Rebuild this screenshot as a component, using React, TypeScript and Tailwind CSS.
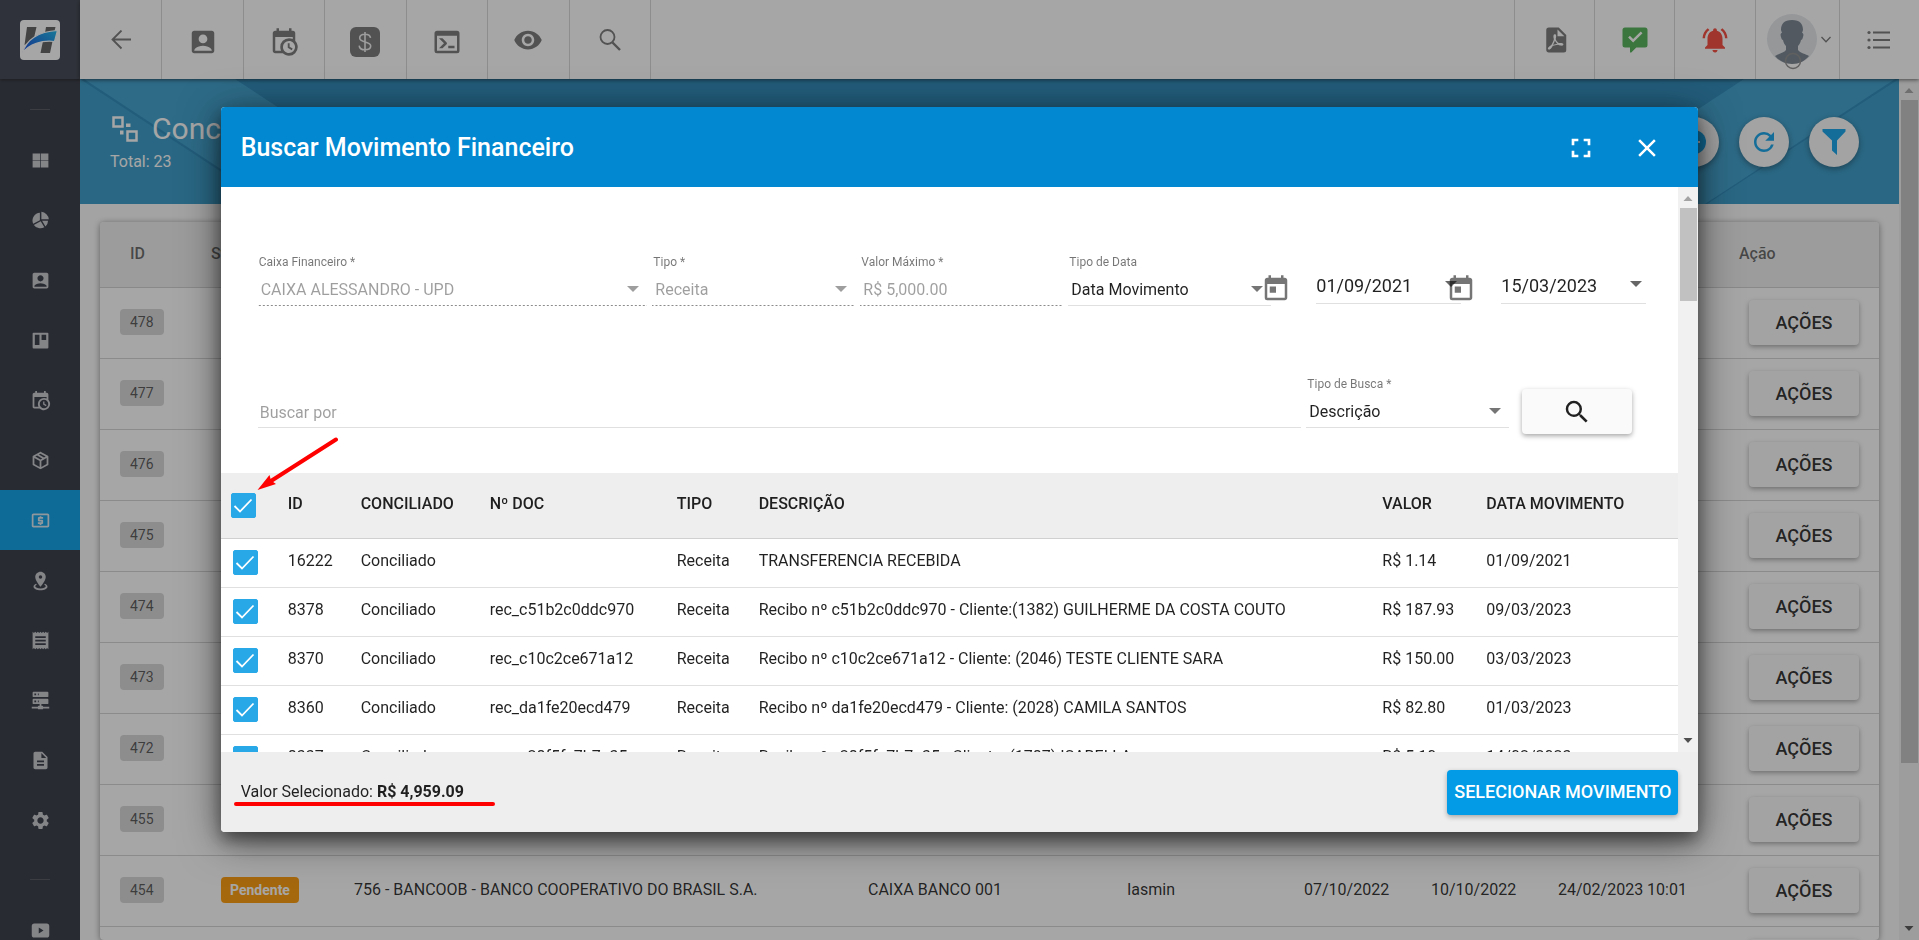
import { useState } from 'react'
import type { ReactNode } from 'react'
import {
  MdAccountBox,
  MdClose,
  MdDescription,
  MdFullscreen,
  MdLocalAtm,
  MdNotificationsActive,
  MdReceipt,
  MdRefresh,
  MdRemoveRedEye,
  MdSearch,
  MdSettings,
  MdToday,
} from 'react-icons/md'

type Movimento = {
  id: string
  doc: string
  descricao: string
  valor: string
  data: string
}

type Conciliacao = {
  id: string
  status?: string
  banco?: string
  caixa?: string
  usuario?: string
  inicio?: string
  fim?: string
  cadastro?: string
}

const MOVIMENTOS: Movimento[] = [
  { id: '16222', doc: '', descricao: 'TRANSFERENCIA RECEBIDA', valor: 'R$ 1.14', data: '01/09/2021' },
  { id: '8378', doc: 'rec_c51b2c0ddc970', descricao: 'Recibo nº c51b2c0ddc970 - Cliente:(1382) GUILHERME DA COSTA COUTO', valor: 'R$ 187.93', data: '09/03/2023' },
  { id: '8370', doc: 'rec_c10c2ce671a12', descricao: 'Recibo nº c10c2ce671a12 - Cliente: (2046) TESTE CLIENTE SARA', valor: 'R$ 150.00', data: '03/03/2023' },
  { id: '8360', doc: 'rec_da1fe20ecd479', descricao: 'Recibo nº da1fe20ecd479 - Cliente: (2028) CAMILA SANTOS', valor: 'R$ 82.80', data: '01/03/2023' },
  { id: '8337', doc: 'rec_c28f5fe7b7a35', descricao: 'Recibo nº c28f5fe7b7a35 - Cliente: (1787) ISABELLA', valor: 'R$ 5.10', data: '14/02/2023' },
]

const CONCILIACOES: Conciliacao[] = [
  { id: '478' },
  { id: '477' },
  { id: '476' },
  { id: '475' },
  { id: '474' },
  { id: '473' },
  { id: '472' },
  { id: '455' },
  {
    id: '454',
    status: 'Pendente',
    banco: '756 - BANCOOB - BANCO COOPERATIVO DO BRASIL S.A.',
    caixa: 'CAIXA BANCO 001',
    usuario: 'Iasmin',
    inicio: '07/10/2022',
    fim: '10/10/2022',
    cadastro: '24/02/2023 10:01',
  },
  { id: '453' },
]

function Glyph({ d, className }: { d: string; className: string }) {
  return (
    <svg viewBox="0 0 24 24" className={className} fill="currentColor" fillRule="evenodd" aria-hidden="true">
      <path d={d} />
    </svg>
  )
}

const CALENDAR_CLOCK =
  'M15,13H16.5V15.82L18.94,17.23L18.19,18.53L15,16.69V13M19,8H5V19H9.67C9.24,18.09 9,17.07 9,16A7,7 0 0,1 16,9C17.07,9 18.09,9.24 19,9.67V8M5,21C3.89,21 3,20.1 3,19V5C3,3.89 3.89,3 5,3H6V1H8V3H16V1H18V3H19A2,2 0 0,1 21,5V11.1C22.24,12.36 23,14.09 23,16A7,7 0 0,1 16,23C14.09,23 12.36,22.24 11.1,21H5M16,11.15A4.85,4.85 0 0,0 11.15,16C11.15,18.68 13.32,20.85 16,20.85A4.85,4.85 0 0,0 20.85,16C20.85,13.32 18.68,11.15 16,11.15Z'
const FILE_PDF =
  'M14,9H19.5L14,3.5V9M7,2H15L21,8V20A2,2 0 0,1 19,22H7C5.89,22 5,21.1 5,20V4A2,2 0 0,1 7,2M11.93,12.44C12.34,13.34 12.86,14.08 13.46,14.59L13.87,14.91C13,15.07 11.8,15.35 10.53,15.84L10.42,15.88L10.92,14.84C11.37,13.97 11.7,13.18 11.93,12.44M18.41,16.25C18.59,16.07 18.68,15.84 18.69,15.59C18.72,15.39 18.67,15.2 18.57,15.04C18.28,14.57 17.53,14.35 16.29,14.35L15,14.42L14.13,13.84C13.5,13.32 12.93,12.41 12.53,11.28L12.57,11.14C12.9,9.81 13.21,8.2 12.55,7.54C12.39,7.38 12.17,7.3 11.94,7.3H11.7C11.33,7.3 11,7.69 10.91,8.07C10.54,9.4 10.76,10.13 11.13,11.34C10.88,12.23 10.56,13.25 10.05,14.28L9.09,16.08L8.2,16.57C7,17.32 6.43,18.16 6.32,18.69C6.28,18.88 6.3,19.05 6.37,19.23L6.4,19.28L6.88,19.59L7.32,19.7C8.13,19.7 9.05,18.75 10.29,16.63L10.47,16.56C11.5,16.23 12.78,16 14.5,15.81C15.53,16.32 16.74,16.55 17.5,16.55C17.94,16.55 18.24,16.44 18.41,16.25Z'
const COMMENT_CHECK = 'M4,2H20A2,2 0 0,1 22,4V16A2,2 0 0,1 20,18H13L9,22H8V18H4A2,2 0 0,1 2,16V4A2,2 0 0,1 4,2M10.5,14L18,6.5L16.6,5.1L10.5,11.2L7.9,8.6L6.5,10Z'
const TERMINAL = 'M20,19V7H4V19H20M20,3A2,2 0 0,1 22,5V19A2,2 0 0,1 20,21H4A2,2 0 0,1 2,19V5C2,3.89 2.9,3 4,3H20M13,17V15H18V17H13M9.58,13L5.57,9H8.4L11.7,12.3C12.09,12.69 12.09,13.33 11.7,13.72L8.42,17H5.59L9.58,13Z'
const WINDOWS = 'M3,4H11.6V11.6H3ZM12.4,4H21V11.6H12.4ZM3,12.4H11.6V20H3ZM12.4,12.4H21V20H12.4Z'
const PIE = 'M13,2A9.5,9.5 0 0,1 21.5,10.5H13ZM11.3,3V11.6L3.6,15.6A9,9 0 0,1 11.3,3M12.2,12.8L16.4,19.6A9,9 0 0,1 4.4,17ZM13.8,12.2H20.6A9,9 0 0,1 17.7,18.8Z'
const TRELLO = 'M4,3H20A1,1 0 0,1 21,4V20A1,1 0 0,1 20,21H4A1,1 0 0,1 3,20V4A1,1 0 0,1 4,3M5.5,5.5V17H10.8V5.5ZM13.2,5.5V11.5H18.5V5.5Z'
const PACKAGE =
  'M21,16.5C21,16.88 20.79,17.21 20.47,17.38L12.57,21.82C12.41,21.94 12.21,22 12,22C11.79,22 11.59,21.94 11.43,21.82L3.53,17.38C3.21,17.21 3,16.88 3,16.5V7.5C3,7.12 3.21,6.79 3.53,6.62L11.43,2.18C11.59,2.06 11.79,2 12,2C12.21,2 12.41,2.06 12.57,2.18L20.47,6.62C20.79,6.79 21,7.12 21,7.5V16.5M12,4.15L10.11,5.22L16,8.61L17.96,7.5L12,4.15M6.04,7.5L12,10.85L13.96,9.75L8.08,6.35L6.04,7.5M5,15.91L11,19.29V12.58L5,9.21V15.91M19,15.91V9.21L13,12.58V19.29L19,15.91Z'
const MARKER =
  'M12,2C15.31,2 18,4.66 18,7.95C18,12.41 12,19 12,19S6,12.41 6,7.95C6,4.66 8.69,2 12,2M12,6A2,2 0 0,0 10,8A2,2 0 0,0 12,10A2,2 0 0,0 14,8A2,2 0 0,0 12,6M20,19C20,21.21 16.42,23 12,23C7.58,23 4,21.21 4,19C4,17.71 5.22,16.56 7.11,15.83L7.75,16.74C6.67,17.19 6,17.81 6,18.5C6,19.88 8.69,21 12,21C15.31,21 18,19.88 18,18.5C18,17.81 17.33,17.19 16.25,16.74L16.89,15.83C18.78,16.56 20,17.71 20,19Z'
const SERVER =
  'M13,18H14A1,1 0 0,1 15,19H22V21H15A1,1 0 0,1 14,22H10A1,1 0 0,1 9,21H2V19H9A1,1 0 0,1 10,18H11V16H4A1,1 0 0,1 3,15V11A1,1 0 0,1 4,10H20A1,1 0 0,1 21,11V15A1,1 0 0,1 20,16H13V18M4,2H20A1,1 0 0,1 21,3V7A1,1 0 0,1 20,8H4A1,1 0 0,1 3,7V3A1,1 0 0,1 4,2M9,6H10V4H9V6M9,14H10V12H9V14M5,4V6H7V4H5M5,12V14H7V12H5Z'
const YOUTUBE = 'M5,4H19A3,3 0 0,1 22,7V17A3,3 0 0,1 19,20H5A3,3 0 0,1 2,17V7A3,3 0 0,1 5,4M10,8.5V15.5L15.5,12Z'

const MENU: { label: string; icon: ReactNode; active?: boolean }[] = [
  { label: 'Dashboard', icon: <Glyph d={WINDOWS} className="size-[21px]" /> },
  { label: 'Relatórios', icon: <Glyph d={PIE} className="size-[21px]" /> },
  { label: 'Clientes', icon: <MdAccountBox className="size-[21px]" /> },
  { label: 'Quadros', icon: <Glyph d={TRELLO} className="size-[21px]" /> },
  { label: 'Agenda', icon: <Glyph d={CALENDAR_CLOCK} className="size-[21px]" /> },
  { label: 'Produtos', icon: <Glyph d={PACKAGE} className="size-[21px]" /> },
  { label: 'Financeiro', icon: <MdLocalAtm className="size-[21px]" />, active: true },
  { label: 'Mapa', icon: <Glyph d={MARKER} className="size-[21px]" /> },
  { label: 'Notas', icon: <MdReceipt className="size-[21px]" /> },
  { label: 'Rede', icon: <Glyph d={SERVER} className="size-[21px]" /> },
  { label: 'Documentos', icon: <MdDescription className="size-[21px]" /> },
  { label: 'Configurações', icon: <MdSettings className="size-[21px]" /> },
]

function Logo() {
  return (
    <svg viewBox="0 0 40 40" className="size-10" aria-hidden="true">
      <defs>
        <linearGradient id="swoosh" x1="0" y1="1" x2="1" y2="0">
          <stop offset="0" stopColor="#0a3fd8" />
          <stop offset="1" stopColor="#16b4e8" />
        </linearGradient>
      </defs>
      <rect width="40" height="40" rx="4" fill="#fff" />
      <path d="M7 7h9.500l-3 13L4.500 25z M26 7h9.500l-1 4-9.500 2z M23 21l10-2-3 14h-9.500z" fill="#5a5a5a" />
      <path d="M2.500 33C6 20 18 11.500 37.500 10.500l-3 11C22 20 9 24 2.500 33z" fill="url(#swoosh)" stroke="#fff" strokeWidth="1.2" />
    </svg>
  )
}

function Sidebar() {
  return (
    <aside className="flex w-20 shrink-0 flex-col overflow-hidden bg-[#303340] text-[#c6c8cc]">
      <a href="#" aria-label="Início" className="flex h-[79px] shrink-0 items-center justify-center bg-[#3a3f4c] shadow-[0_1px_3px_rgba(0,0,0,0.5)]">
        <Logo />
      </a>
      <div className="flex h-[51px] shrink-0 justify-center pt-[30px]">
        <span className="h-px w-5 bg-[#4d505a]" />
      </div>
      {MENU.map((m) => (
        <a
          key={m.label}
          href="#"
          aria-label={m.label}
          className={`flex h-[60px] shrink-0 items-center justify-center ${m.active ? 'bg-[#039be5] text-[#d8e8f0]' : ''}`}
        >
          {m.icon}
        </a>
      ))}
      <div className="flex h-[50px] shrink-0 justify-center pt-[29px]">
        <span className="h-px w-5 bg-[#4d505a]" />
      </div>
      <a href="#" aria-label="Vídeos" className="flex h-[60px] shrink-0 items-center justify-center">
        <Glyph d={YOUTUBE} className="size-[21px]" />
      </a>
    </aside>
  )
}

function TopBar() {
  const left: { label: string; icon: ReactNode }[] = [
    {
      label: 'Voltar',
      icon: (
        <svg viewBox="0 0 20 20" className="size-5" fill="none" stroke="currentColor" strokeWidth="1.8">
          <path d="M20 9.5H1M10.500 0.500L1.500 9.500l9 9" />
        </svg>
      ),
    },
    { label: 'Clientes', icon: <MdAccountBox className="mt-1 size-[30px]" /> },
    { label: 'Agenda', icon: <Glyph d={CALENDAR_CLOCK} className="mt-1 size-[30px]" /> },
    {
      label: 'Financeiro',
      icon: (
        <svg viewBox="0 0 30 30" className="mt-1 size-[30px]">
          <rect width="30" height="30" rx="6" fill="currentColor" />
          <path
            d="M15 5v20M20.500 10.800C20.200 8.500 18 7.200 15 7.200S9.700 8.700 9.700 11c0 5.200 11 2.700 11 8 0 2.300-2.400 3.800-5.700 3.800s-5.600-1.600-5.800-4.200"
            fill="none"
            stroke="#f0f0f0"
            strokeWidth="1.6"
          />
        </svg>
      ),
    },
    { label: 'Terminal', icon: <Glyph d={TERMINAL} className="mt-1 size-[30px]" /> },
    { label: 'Visualizar', icon: <MdRemoveRedEye className="size-[30px]" /> },
    {
      label: 'Pesquisar',
      icon: (
        <svg viewBox="0 0 22 22" className="size-[22px]" fill="none" stroke="currentColor" strokeWidth="1.800">
          <circle cx="8.500" cy="8" r="7" />
          <path d="M13.500 13.500l7.500 7.500" strokeWidth="2.400" />
        </svg>
      ),
    },
  ]
  return (
    <header className="z-10 flex h-[79px] shrink-0 justify-between bg-white text-[#737373] shadow-[0_1px_4px_rgba(0,0,0,0.6)]">
      <nav className="flex w-[571px] pl-px">
        {left.map((b) => (
          <button key={b.label} aria-label={b.label} className="flex flex-1 items-center justify-center border-r border-[#d6d6d6]">
            {b.icon}
          </button>
        ))}
      </nav>
      <nav className="flex w-[405px]">
        <button aria-label="PDF" className="flex flex-1 items-center justify-center border-l border-[#d6d6d6]">
          <Glyph d={FILE_PDF} className="size-[30px]" />
        </button>
        <button aria-label="Mensagens" className="flex flex-1 items-center justify-center border-l border-[#d6d6d6] text-[#4caf50]">
          <Glyph d={COMMENT_CHECK} className="size-[30px]" />
        </button>
        <button aria-label="Notificações" className="flex flex-1 items-center justify-center border-l border-[#d6d6d6] text-[#f44336]">
          <MdNotificationsActive className="size-[30px]" />
        </button>
        <button aria-label="Perfil" className="flex flex-1 items-center justify-center gap-1 border-l border-[#d6d6d6] pl-1">
          <svg viewBox="0 0 50 60" className="h-[60px] w-[50px]">
            <circle cx="25" cy="29" r="25" fill="#e3e6ea" />
            <path
              d="M25 10c8 0 11 4 11 10l-1 3c1 0 2 1 1 4-.5 2-1 3-2 3-.5 3-2 5-3 6v4c2 3 8 4 11 6-4 5-10 8-17 8s-13-3-17-8c3-2 9-3 11-6v-4c-1-1-2.500-3-3-6-1 0-1.500-1-2-3-1-3 0-4 1-4l-1-3c0-6 3-10 11-10z"
              fill="#737f8b"
            />
            <circle cx="26" cy="51" r="7.500" fill="none" stroke="#8a8a8a" strokeWidth="1.500" />
          </svg>
          <svg viewBox="0 0 10 7" className="h-[7px] w-2.5" fill="none" stroke="currentColor" strokeWidth="1.300">
            <path d="M.5 1L5 5.800 9.500 1" />
          </svg>
        </button>
        <button aria-label="Menu" className="flex flex-1 items-center justify-center border-l border-[#d6d6d6]">
          <svg viewBox="0 0 24 20" className="h-5 w-6" fill="currentColor">
            <circle cx="2" cy="2.500" r="1.600" />
            <circle cx="2" cy="10" r="1.600" />
            <circle cx="2" cy="17.500" r="1.600" />
            <path d="M6 1.500h17v2H6zM6 9h17v2H6zM6 16.500h17v2H6z" />
          </svg>
        </button>
      </nav>
    </header>
  )
}

function Scrollbar({ thumb }: { thumb: string }) {
  return (
    <div className="flex w-5 shrink-0 flex-col items-center bg-[#f1f1f1]" aria-hidden="true">
      <svg viewBox="0 0 20 21" className="h-[21px] w-5 shrink-0">
        <path d="M5.500 14L10 9l4.500 5z" fill="#a3a3a3" />
      </svg>
      <div className="flex min-h-0 w-[17px] flex-1 flex-col">
        <div className={`bg-[#c1c1c1] ${thumb}`} />
      </div>
      <svg viewBox="0 0 20 21" className="h-[21px] w-5 shrink-0">
        <path d="M5.500 7L10 12l4.500-5z" fill="#505050" />
      </svg>
    </div>
  )
}

const RAISED = 'h-[45px] w-[110px] rounded-[4px] bg-[#fafafa] shadow-[0_2px_5px_rgba(0,0,0,0.35)]'

function Hero() {
  return (
    <section className="relative flex h-[125px] shrink-0 items-start justify-between overflow-hidden bg-[#2485b7] pr-10 pl-[30px] text-white">
      <svg viewBox="0 0 1819 125" preserveAspectRatio="none" className="absolute inset-0 size-full" aria-hidden="true">
        <rect width="1819" height="125" fill="#2485b7" />
        <path d="M0 0L190 125H0z" fill="#3097c6" />
        <path d="M1819 0L1627 125H1819z" fill="#3097c6" />
        <path d="M4 0H155L345 125H194z" fill="#379dcc" />
        <path d="M1815 0H1664L1474 125H1625z" fill="#379dcc" />
      </svg>
      <div className="relative pt-8">
        <h1 className="flex items-center gap-[14px] text-[30px] leading-9">
          <svg viewBox="0 0 26 26" className="ml-0.5 size-[26px]" fill="none" stroke="currentColor" strokeWidth="2.500">
            <path d="M1.500 1.500h9v9h-9zM15.500 15.500h9v9h-9z" />
            <path d="M14 7.500h4.500v3.500H14zM8 14.500h3.500v4H8z" fill="currentColor" stroke="none" />
          </svg>
          Conciliação
        </h1>
        <p className="mt-[3px] text-base leading-6">Total: 23</p>
      </div>
      <div className="relative flex gap-5 pt-[38px] text-[#0ba0e8]">
        <button aria-label="Adicionar" className="flex size-[50px] items-center justify-center rounded-full bg-[#fafafa] shadow-[0_2px_6px_rgba(0,0,0,0.4)]">
          <svg viewBox="0 0 24 24" className="size-6">
            <circle cx="12" cy="12" r="12" fill="currentColor" />
            <path d="M12 6v12M6 12h12" stroke="#fff" strokeWidth="2" />
          </svg>
        </button>
        <button aria-label="Atualizar" className="flex size-[50px] items-center justify-center rounded-full bg-[#fafafa] shadow-[0_2px_6px_rgba(0,0,0,0.4)]">
          <MdRefresh className="size-[30px]" />
        </button>
        <button aria-label="Filtrar" className="flex size-[50px] items-center justify-center rounded-full bg-[#fafafa] shadow-[0_2px_6px_rgba(0,0,0,0.4)]">
          <svg viewBox="0 0 24 26" className="h-[26px] w-6" fill="currentColor">
            <path d="M.5 0h23v2.500L15 11.500V26l-5-4.500v-10L.5 2.500z" />
          </svg>
        </button>
      </div>
    </section>
  )
}

function ConciliacaoTable() {
  return (
    <div className="mx-5 mt-[18px] overflow-hidden rounded-[4px] bg-white shadow-[0_1px_6px_rgba(0,0,0,0.45)]">
      <table className="w-full table-fixed text-left text-base text-black/87">
        <colgroup>
          <col className="w-[101px]" />
          <col className="w-[142px]" />
          <col />
          <col className="w-[260px]" />
          <col className="w-[176px]" />
          <col className="w-[128px]" />
          <col className="w-[127px]" />
          <col className="w-[181px]" />
          <col className="w-[150px]" />
        </colgroup>
        <thead>
          <tr className="h-[65px] border-b border-[#cfcfcf] bg-[#eeeeee] text-black/60">
            <th className="pl-[30px] font-medium">ID</th>
            <th className="pl-2.5 font-medium">Status</th>
            <th colSpan={6} />
            <th className="pl-2.5 font-medium">Ação</th>
          </tr>
        </thead>
        <tbody>
          {CONCILIACOES.map((c) => (
            <tr key={c.id} className="h-[71px] border-b border-[#d3d3d3]">
              <td className="pb-px pl-5">
                <span className="inline-block rounded-[4px] bg-[#d6d6d6] px-2.5 text-sm leading-[26px] text-black/65">{c.id}</span>
              </td>
              <td className="pb-px pl-5">
                {c.status && (
                  <span className="inline-block rounded-[4px] bg-[#ff9800] px-[9px] text-sm leading-[26px] font-bold text-white">{c.status}</span>
                )}
              </td>
              <td className="pb-px pl-[11px]">{c.banco}</td>
              <td className="pb-px pl-[11px]">{c.caixa}</td>
              <td className="pb-px pl-2.5">{c.usuario}</td>
              <td className="pb-px pl-[11px]">{c.inicio}</td>
              <td className="pb-px pl-2.5">{c.fim}</td>
              <td className="pb-px pl-2.5">{c.cadastro}</td>
              <td className="pl-5">
                <button className={`${RAISED} block text-lg font-medium`}>AÇÕES</button>
              </td>
            </tr>
          ))}
        </tbody>
      </table>
    </div>
  )
}

function Caret({ className = '' }: { className?: string }) {
  return (
    <svg viewBox="0 0 12 6" className={`h-1.5 w-3 ${className}`} fill="currentColor" aria-hidden="true">
      <path d="M0 0h12L6 6z" />
    </svg>
  )
}

const SOLID_LINE = 'border-b border-[#e0e0e0]'
const DOTTED_LINE =
  'bg-[linear-gradient(to_right,rgba(0,0,0,0.45)_0%,rgba(0,0,0,0.45)_50%,transparent_50%)] bg-[length:4px_1px] bg-bottom bg-repeat-x'

function SelectField({ id, label, value, disabled, className }: { id: string; label: string; value: string; disabled?: boolean; className: string }) {
  return (
    <div className={className}>
      <label htmlFor={id} className="block pl-px text-xs leading-4 text-black/54">
        {label}
      </label>
      <div className={`relative h-9 ${disabled ? DOTTED_LINE : SOLID_LINE}`}>
        <select
          id={id}
          disabled={disabled}
          className={`h-full w-full appearance-none bg-transparent pt-1 pl-[3px] text-base opacity-100 outline-none ${disabled ? 'text-black/38' : 'text-black/87'}`}
        >
          <option>{value}</option>
        </select>
        <Caret className={`pointer-events-none absolute top-4 right-2 ${disabled ? 'text-black/38' : 'text-black/54'}`} />
      </div>
    </div>
  )
}

function DateField({ label, value }: { label: string; value: string }) {
  return (
    <div className="-ml-5 flex w-[205px] items-end">
      <button aria-label={`Abrir calendário: ${label}`} className="flex w-10 justify-center text-black/54">
        <MdToday className="size-[30px]" />
      </button>
      <div className={`relative ml-5 flex-1 ${SOLID_LINE}`}>
        <input aria-label={label} defaultValue={value} className="block h-[30px] w-full bg-transparent pb-1.5 text-lg text-black/87 outline-none" />
        <Caret className="pointer-events-none absolute top-2 right-1 text-black/60" />
      </div>
    </div>
  )
}

function Check({ label, checked, onChange }: { label: string; checked: boolean; onChange: () => void }) {
  return (
    <span className="relative block size-[25px]">
      <input
        type="checkbox"
        aria-label={label}
        checked={checked}
        onChange={onChange}
        className="block size-[25px] appearance-none rounded-[2px] border border-[#29a8e8] checked:bg-[#29a8e8]"
      />
      {checked && (
        <svg viewBox="0 0 25 25" className="pointer-events-none absolute inset-0 size-full" fill="none" stroke="#fff" strokeWidth="1.800">
          <path d="M3.500 13l5.500 5.500L20.500 6.500" />
        </svg>
      )}
    </span>
  )
}

function MovimentoTable() {
  const [selected, setSelected] = useState<string[]>(MOVIMENTOS.map((m) => m.id))
  const all = selected.length === MOVIMENTOS.length

  const toggle = (id: string) =>
    setSelected((prev) => (prev.includes(id) ? prev.filter((s) => s !== id) : [...prev, id]))

  return (
    <table className="mt-[39px] w-full table-fixed text-left text-base text-black/87">
      <colgroup>
        <col className="w-[57px]" />
        <col className="w-[73px]" />
        <col className="w-[129px]" />
        <col className="w-[187px]" />
        <col className="w-[82px]" />
        <col />
        <col className="w-[104px]" />
        <col className="w-[202px]" />
      </colgroup>
      <thead>
        <tr className="h-[65px] border-b border-[#d0d0d0] bg-[#eeeeee] whitespace-nowrap">
          <th className="pl-2.5">
            <Check label="Selecionar todos" checked={all} onChange={() => setSelected(all ? [] : MOVIMENTOS.map((m) => m.id))} />
          </th>
          <th className="pb-0.5 pl-2.5 font-medium">ID</th>
          <th className="pb-0.5 pl-2.5 font-medium">CONCILIADO</th>
          <th className="pb-0.5 pl-2.5 font-medium">Nº DOC</th>
          <th className="pb-0.5 pl-2.5 font-medium">TIPO</th>
          <th className="pb-0.5 pl-2.5 font-medium">DESCRIÇÃO</th>
          <th className="pb-0.5 pl-2.5 font-medium">VALOR</th>
          <th className="pb-0.5 pl-2.5 font-medium">DATA MOVIMENTO</th>
        </tr>
      </thead>
      <tbody>
        {MOVIMENTOS.map((m) => (
          <tr key={m.id} className="h-[49px] border-b border-[#e0e0e0]">
            <td className="pl-3">
              <Check label={`Selecionar ${m.id}`} checked={selected.includes(m.id)} onChange={() => toggle(m.id)} />
            </td>
            <td className="pb-[3px] pl-2.5">{m.id}</td>
            <td className="pb-[3px] pl-2.5">Conciliado</td>
            <td className="pb-[3px] pl-2.5">{m.doc}</td>
            <td className="pb-[3px] pl-2.5">Receita</td>
            <td className="pb-[3px] pl-2.5">{m.descricao}</td>
            <td className="pb-[3px] pl-2.5">{m.valor}</td>
            <td className="pb-[3px] pl-2.5">{m.data}</td>
          </tr>
        ))}
      </tbody>
    </table>
  )
}

function BuscarMovimentoModal() {
  return (
    <div className="fixed inset-0 z-20 flex bg-[#212121]/40 px-[11.5%] pt-[107px] pb-[108px]">
      <div
        role="dialog"
        aria-label="Buscar Movimento Financeiro"
        className="relative flex flex-1 flex-col overflow-hidden rounded-[4px] bg-white shadow-[0_8px_40px_rgba(0,0,0,0.55),0_8px_16px_rgba(0,0,0,0.4)]"
      >
        <header className="flex h-20 shrink-0 items-center justify-between bg-[#0288d1] pt-px pr-9 pl-5 text-white">
          <h2 className="text-[25px] font-medium">Buscar Movimento Financeiro</h2>
          <div className="flex gap-[35px]">
            <button aria-label="Tela cheia">
              <MdFullscreen className="size-[32px]" />
            </button>
            <button aria-label="Fechar">
              <MdClose className="size-[30px]" />
            </button>
          </div>
        </header>

        <div className="flex min-h-0 flex-1">
          <div className="min-w-0 flex-1 overflow-hidden pt-[67px]">
            {/* Filtros */}
            <div className="flex items-end gap-[5px] pr-8 pl-[37px]">
              <SelectField id="caixa" label="Caixa Financeiro *" value="CAIXA ALESSANDRO - UPD" disabled className="flex-1" />
              <SelectField id="tipo" label="Tipo *" value="Receita" disabled className="w-[203px]" />
              <div className="w-[203px]">
                <label htmlFor="valor" className="block pl-px text-xs leading-4 text-black/54">
                  Valor Máximo *
                </label>
                <input
                  id="valor"
                  disabled
                  defaultValue="R$ 5,000.00"
                  className={`block h-9 w-full pt-0.5 pl-[3px] text-base text-black/38 outline-none ${DOTTED_LINE}`}
                />
              </div>
              <SelectField id="tipo-data" label="Tipo de Data" value="Data Movimento" className="w-[203px]" />
              <div className="flex pb-0.5">
                <DateField label="Data inicial" value="01/09/2021" />
                <DateField label="Data final" value="15/03/2023" />
              </div>
            </div>

            <div className="mt-[70px] flex items-start gap-[5px] pr-[46px] pl-[37px]">
              <div className="flex-1 pt-4">
                <input
                  aria-label="Buscar por"
                  placeholder="Buscar por"
                  className={`block h-9 w-full bg-transparent pt-1.5 pl-0.5 text-base outline-none placeholder:text-black/38 ${SOLID_LINE}`}
                />
              </div>
              <SelectField id="tipo-busca" label="Tipo de Busca *" value="Descrição" className="w-[203px]" />
              <button aria-label="Buscar" className={`${RAISED} mt-[13px] ml-2 flex items-center justify-center text-black/87`}>
                <MdSearch className="size-[30px]" />
              </button>
            </div>

            <MovimentoTable />
          </div>
          <Scrollbar thumb="h-[93px]" />
        </div>

        <footer className="flex h-20 shrink-0 items-center justify-between bg-[#eeeeee] pr-5 pl-5">
          <p className="relative text-base text-black/87">
            Valor Selecionado: <strong className="font-bold">R$ 4,959.09</strong>
            <span className="absolute top-[22px] -left-[7px] h-1 w-[261px] rounded-full bg-[#ff0000]" />
          </p>
          <button className="h-[45px] rounded-[4px] bg-[#039be5] px-[7px] text-lg font-medium text-white shadow-[0_2px_5px_rgba(0,0,0,0.3)]">
            SELECIONAR MOVIMENTO
          </button>
        </footer>

        {/* Seta apontando para "selecionar todos" */}
        <svg viewBox="0 0 84 56" className="pointer-events-none absolute top-[330px] left-[35px] h-14 w-[84px]" aria-hidden="true">
          <path d="M80 2.500L15 44" stroke="#ff0000" strokeWidth="4" strokeLinecap="round" />
          <path d="M1.500 53L13.500 38l1.500 5.500 5 3.500z" fill="#ff0000" />
        </svg>
      </div>
    </div>
  )
}

export default function App() {
  return (
    <div className="flex h-screen overflow-hidden bg-[#fafafa] font-['Roboto',sans-serif]">
      <Sidebar />
      <div className="flex min-w-0 flex-1 flex-col">
        <TopBar />
        <div className="flex min-h-0 flex-1">
          <main className="flex min-w-0 flex-1 flex-col overflow-hidden">
            <Hero />
            <ConciliacaoTable />
          </main>
          <Scrollbar thumb="h-[81%]" />
        </div>
      </div>
      <BuscarMovimentoModal />
    </div>
  )
}
